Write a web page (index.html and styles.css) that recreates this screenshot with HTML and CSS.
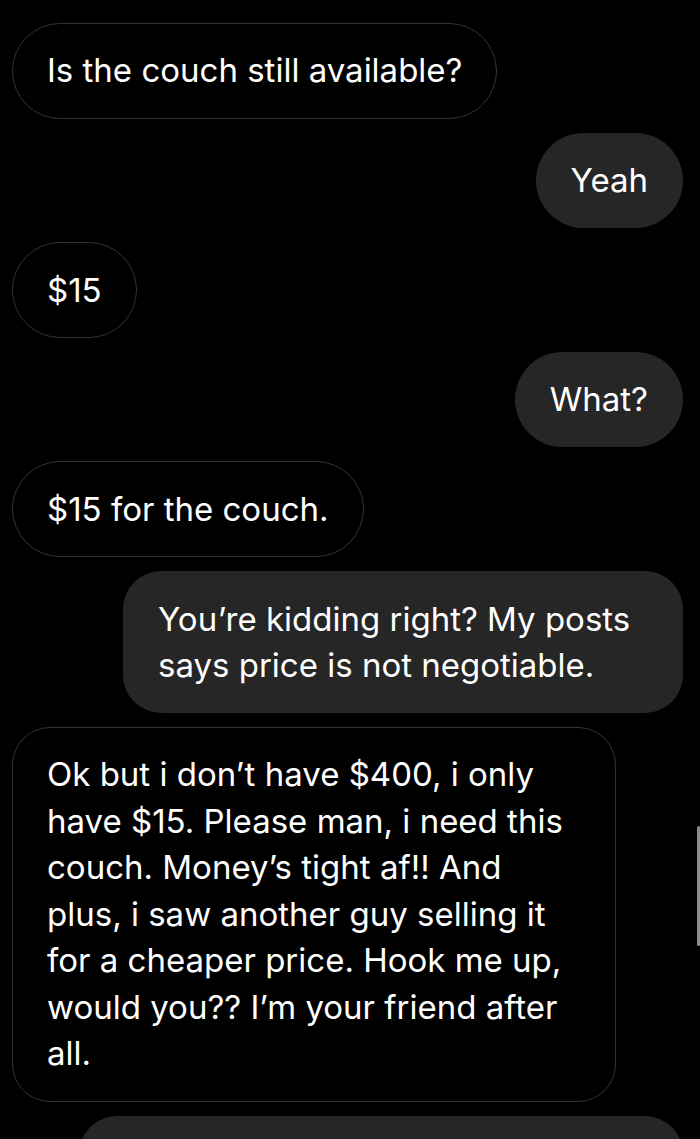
FILE: index.html
```html
<!DOCTYPE html>
<html lang="en">
<head>
  <meta charset="UTF-8">
  <meta name="viewport" content="width=device-width, initial-scale=1.0">
  <title>Messages</title>
  <link rel="stylesheet" href="styles.css">
</head>
<body>

<div class="chat">
  <div class="msg in">Is the couch still available?</div>
  <div class="msg out">Yeah</div>
  <div class="msg in">$15</div>
  <div class="msg out">What?</div>
  <div class="msg in">$15 for the couch.</div>
  <div class="msg out multi narrow">You’re kidding right? My posts says price is not negotiable.</div>
  <div class="msg in multi">Ok but i don’t have $400, i only have $15. Please man, i need this couch. Money’s tight af!! And plus, i saw another guy selling it for a cheaper price. Hook me up, would you?? I’m your friend after all.</div>
  <div class="msg out multi last"></div>
</div>

<div class="scroll-indicator"></div>

</body>
</html>
```

FILE: styles.css
```css
html, body { margin: 0; height: 100%; overflow: hidden; background: #000; }
body { font-family: Inter, "Liberation Sans", sans-serif; color: #fff; }

.chat { display: flex; flex-direction: column; gap: 14px; padding: 23px 17px 0 12px; }

.msg { max-width: 604px; padding: 24.5px 35px; font-size: 33px; line-height: 46.45px; border-radius: 48px; box-sizing: border-box; }
.msg.multi { border-radius: 38px; }
.msg.in { align-self: flex-start; padding: 23.3px 34px 24px; border: 1px solid #343434; }
.msg.out { align-self: flex-end; background: #262626; }
.msg.narrow { max-width: 560px; }
.msg.last { width: 604px; height: 140px; }

.scroll-indicator { position: fixed; right: 0; top: 826px; width: 3px; height: 120px; border-radius: 2px; background: #8c8c8c; }
```
